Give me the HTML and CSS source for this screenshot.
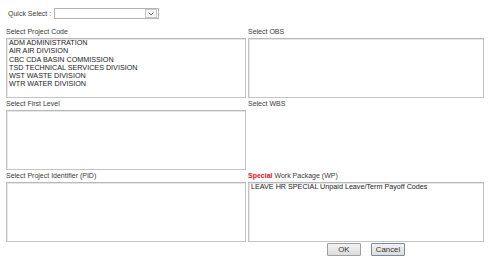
FILE: index.html
```html
<!DOCTYPE html>
<html lang="en">
<head>
  <meta charset="UTF-8">
  <title>Select Work Package</title>
  <link rel="stylesheet" href="styles.css">
</head>
<body>
  <div class="quick-row">
    <label class="quick-label">Quick Select :</label>
    <div class="combo">
      <span class="combo-arrow">
        <svg width="8" height="6" viewBox="0 0 8 6"><path d="M1.5 1.5 L4 4 L6.5 1.5" fill="none" stroke="#6a6a6a" stroke-width="1"/></svg>
      </span>
    </div>
  </div>

  <div class="picker">
    <div class="field">
      <div class="field-label">Select Project Code</div>
      <div class="listbox">
        <div class="option">ADM ADMINISTRATION</div>
        <div class="option">AIR AIR DIVISION</div>
        <div class="option">CBC CDA BASIN COMMISSION</div>
        <div class="option">TSD TECHNICAL SERVICES DIVISION</div>
        <div class="option">WST WASTE DIVISION</div>
        <div class="option">WTR WATER DIVISION</div>
      </div>
    </div>
    <div class="field">
      <div class="field-label">Select OBS</div>
      <div class="listbox"></div>
    </div>

    <div class="field">
      <div class="field-label">Select First Level</div>
      <div class="listbox"></div>
    </div>
    <div class="field">
      <div class="field-label">Select WBS</div>
      <div class="listbox empty"></div>
    </div>

    <div class="field">
      <div class="field-label">Select Project Identifier (PID)</div>
      <div class="listbox"></div>
    </div>
    <div class="field">
      <div class="field-label"><span class="special">Special</span> Work Package (WP)</div>
      <div class="listbox">
        <div class="option">LEAVE HR SPECIAL Unpaid Leave/Term Payoff Codes</div>
      </div>
    </div>

    <div></div>
    <div class="actions">
      <button class="btn ok">OK</button>
      <button class="btn cancel">Cancel</button>
    </div>
  </div>
</body>
</html>
```

FILE: styles.css
```css
body {
  margin: 0;
  font-family: "Liberation Sans", Arial, sans-serif;
  background-color: #ffffff;
  color: #3a3a3a;
}

.quick-row {
  display: flex;
  align-items: center;
  gap: 3px;
  padding: 8px 0 0 8px;
  height: 11px;
}

.quick-label {
  font-size: 7px;
}

.combo {
  width: 102px;
  height: 9px;
  border: 1px solid #b4b4b4;
  background-color: #fff;
  display: flex;
  justify-content: flex-end;
  align-items: center;
  padding-right: 1px;
}

.combo-arrow {
  width: 10px;
  height: 7px;
  border: 1px solid #c8c8c8;
  background-color: #f4f4f4;
  display: flex;
  align-items: center;
  justify-content: center;
}

.picker {
  display: grid;
  grid-template-columns: 240px 236px;
  column-gap: 2px;
  padding: 7px 0 0 6px;
}

.field-label {
  font-size: 7px;
  line-height: 12px;
  height: 12px;
  white-space: nowrap;
}

.special {
  color: #e8101a;
  font-weight: bold;
}

.listbox {
  box-sizing: border-box;
  height: 60px;
  border: 1px solid #c4c4c4;
  border-top-color: #b8b8b8;
  box-shadow: inset 1px 1px 0 #e6e6e6;
  background-color: #fff;
  padding: 0 2px;
  overflow: hidden;
}

.listbox.empty {
  border: none;
  box-shadow: none;
}

.option {
  font-size: 7.2px;
  line-height: 8.3px;
  color: #222;
  white-space: nowrap;
}

.actions {
  display: flex;
  justify-content: center;
  gap: 10px;
  padding-top: 1px;
}

.btn {
  font-family: "Liberation Sans", Arial, sans-serif;
  font-size: 7.8px;
  height: 13px;
  padding: 0 4px;
  border: 1px solid #a0a0a0;
  border-radius: 1px;
  background: linear-gradient(#f2f2f2, #dcdcdc);
  color: #333;
  cursor: pointer;
}

.btn.ok {
  width: 34px;
}

.btn.cancel {
  border-color: #7a8aa8;
}
```
